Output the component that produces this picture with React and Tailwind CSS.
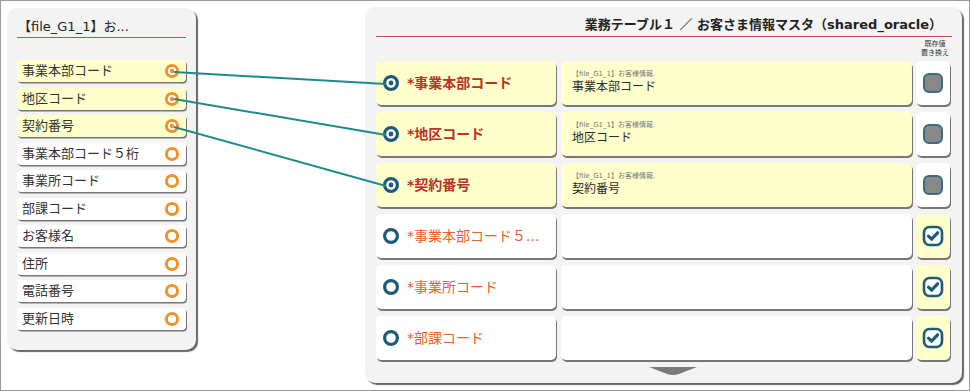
import React from "react";

const leftItems = [
  { name: "事業本部コード", linked: true },
  { name: "地区コード", linked: true },
  { name: "契約番号", linked: true },
  { name: "事業本部コード５桁", linked: false },
  { name: "事業所コード", linked: false },
  { name: "部課コード", linked: false },
  { name: "お客様名", linked: false },
  { name: "住所", linked: false },
  { name: "電話番号", linked: false },
  { name: "更新日時", linked: false },
];

const rows = [
  { label: "*事業本部コード", linked: true, src: "事業本部コード" },
  { label: "*地区コード", linked: true, src: "地区コード" },
  { label: "*契約番号", linked: true, src: "契約番号" },
  { label: "*事業本部コード５...", linked: false },
  { label: "*事業所コード", linked: false },
  { label: "*部課コード", linked: false },
];

const OrangeDot = ({ linked }) => (
  <svg width="16" height="16" viewBox="0 0 16 16">
    <circle cx="8" cy="8" r="5.6" fill="white" stroke="#f0922b" strokeWidth="3" />
    {linked && <circle cx="8" cy="8" r="2.2" fill="#f0922b" />}
  </svg>
);

const TealDot = ({ linked }) => (
  <svg width="18" height="18" viewBox="0 0 18 18">
    <circle cx="9" cy="9" r="6.4" fill="white" stroke="#1d5b77" strokeWidth="3.2" />
    {linked && <circle cx="9" cy="9" r="2.4" fill="#1d5b77" />}
  </svg>
);

const CheckBox = () => (
  <svg width="22" height="22" viewBox="0 0 22 22">
    <rect x="2" y="2" width="18" height="18" rx="5.5" fill="white" stroke="#1d5b77" strokeWidth="2.6" />
    <path d="M6.5 11.2 L9.6 14.2 L15.6 7.8" fill="none" stroke="#1d5b77" strokeWidth="3.2" strokeLinecap="round" strokeLinejoin="round" />
  </svg>
);

export default function App() {
  return (
    <div className="relative w-[970px] h-[391px] box-border border border-[#9a9a9a] bg-white flex justify-between items-start pl-[6px] pr-[7px] pt-[6px] font-['DejaVu_Sans','Noto_Sans_CJK_JP',sans-serif] text-[#333]">
      {/* source file panel */}
      <div className="w-[189px] h-[342px] mt-[1px] rounded-[10px] bg-[#f3f3f3] shadow-[2px_2px_1px_#666] px-[10px]">
        <div className="pt-[10px] h-[30px] border-b border-[#c0504d] pl-[1px] text-[13px] leading-[18px] text-[#222]">
          【file_G1_1】お...
        </div>
        <div className="mt-[22px] flex flex-col gap-[5.5px]">
          {leftItems.map((it) => (
            <div
              key={it.name}
              className={`h-[22px] rounded-[4px] shadow-[1px_1.5px_0_#777] flex items-center justify-between pl-[5px] pr-[6px] text-[13px] ${
                it.linked ? "bg-[#ffffcc]" : "bg-white"
              }`}
            >
              <span>{it.name}</span>
              <OrangeDot linked={it.linked} />
            </div>
          ))}
        </div>
      </div>

      {/* target table panel */}
      <div className="w-[597px] h-[376px] rounded-[10px] bg-[#f3f3f3] shadow-[2px_2px_1px_#666] pl-[11px] pr-[10px] flex flex-col">
        <div className="h-[30px] pt-[9px] border-b border-[#c0504d] text-right pr-[10px] text-[13px] leading-[18px] font-bold text-[#222]">
          業務テーブル１ ／ お客さま情報マスタ（shared_oracle）
        </div>
        <div className="h-[24px] flex justify-end">
          <div className="w-[34px] pt-[3px] text-center text-[7px] leading-[9px] text-[#333]">
            既存値
            <br />
            置き換え
          </div>
        </div>
        <div className="flex flex-col gap-[7px]">
          {rows.map((r) => (
            <div key={r.label} className="grid grid-cols-[180px_352px_34px] gap-x-[4px] h-[44px]">
              <div
                className={`rounded-[5px] shadow-[1px_2px_0_#777] flex items-center pl-[6px] gap-[7px] text-[14px] ${
                  r.linked ? "bg-[#ffffcc] text-[#b8322a] font-bold" : "bg-white text-[#e8602c]"
                }`}
              >
                <TealDot linked={r.linked} />
                <span>{r.label}</span>
              </div>
              <div
                className={`ml-[1px] rounded-[5px] shadow-[1px_2px_0_#777] flex flex-col justify-center pl-[11px] ${
                  r.linked ? "bg-[#ffffcc]" : "bg-white"
                }`}
              >
                {r.linked && (
                  <>
                    <div className="text-[7px] leading-[10px] text-[#777]">【file_G1_1】お客様情報.</div>
                    <div className="text-[12px] leading-[16px] text-[#2a2a2a] mb-[3px]">{r.src}</div>
                  </>
                )}
              </div>
              <div
                className={`rounded-[5px] shadow-[1px_2px_0_#777] flex items-center justify-center ${
                  r.linked ? "bg-white" : "bg-[#ffffcc]"
                }`}
              >
                {r.linked ? (
                  <div className="w-[20px] h-[20px] rounded-[6px] bg-[#888] border-2 border-[#3b6b80]" />
                ) : (
                  <CheckBox />
                )}
              </div>
            </div>
          ))}
        </div>
        <div className="flex justify-center pl-[18px] mt-[7px]">
          <svg width="48" height="9" viewBox="0 0 48 9">
            <path d="M0 0 L48 0 L30 7 Q24 9 18 7 Z" fill="#7a7a7a" />
          </svg>
        </div>
      </div>

      {/* mapping lines */}
      <svg className="absolute left-0 top-0 pointer-events-none" width="970" height="391">
        <g stroke="#1d8b8e" strokeWidth="2" fill="none">
          <line x1="173" y1="71" x2="385" y2="83" />
          <line x1="173" y1="98" x2="385" y2="134" />
          <line x1="173" y1="126" x2="385" y2="185" />
        </g>
      </svg>
    </div>
  );
}
